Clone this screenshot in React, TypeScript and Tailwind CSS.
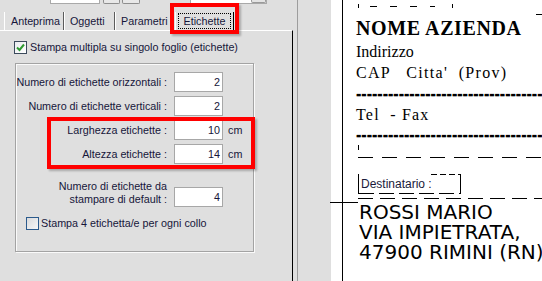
import React from "react";

type RowProps = {
  label: string;
  value: string;
  unit?: string;
};

function NumBox({ value }: { value: string }) {
  return (
    <div className="flex h-[20px] w-[49px] shrink-0 items-center justify-end border border-[#a7a7a7] bg-white pr-[2px]">
      {value}
    </div>
  );
}

function FieldRow({ label, value, unit }: RowProps) {
  return (
    <div className="flex h-[20px] items-center">
      <span className="w-[151px] shrink-0 text-right whitespace-nowrap">{label}</span>
      <div className="ml-[7px]">
        <NumBox value={value} />
      </div>
      {unit && <span className="ml-[5px]">{unit}</span>}
    </div>
  );
}

function CheckBox({ checked }: { checked?: boolean }) {
  return (
    <span
      className={
        checked
          ? "flex size-[13px] shrink-0 items-center justify-center border border-[#3b4a5c] bg-gradient-to-br from-[#e9ecef] to-white"
          : "flex size-[13px] shrink-0 items-center justify-center border border-[#2b5a8c] bg-gradient-to-br from-[#d9dadc] to-[#f7f7f7]"
      }
    >
      {checked && (
        <svg width="9" height="9" viewBox="0 0 9 9">
          <path d="M1 4.5 L3.5 7 L8 1.5" fill="none" stroke="#2f9a32" strokeWidth="2" />
        </svg>
      )}
    </span>
  );
}

const TABS = [
  { label: "Anteprima", width: "w-[60px]", pad: "pl-[7px]" },
  { label: "Oggetti", width: "w-[51px]", pad: "pl-[6px]" },
  { label: "Parametri", width: "w-[58px]", pad: "pl-[6px]" },
];

function LeftPane() {
  return (
    <div className="flex w-[293px] shrink-0 flex-col">
      {/* controls cut off above the tabs */}
      <div className="flex h-[4px] items-start">
        <div className="ml-[50px] h-[4px] w-[50px] border-x border-b border-[#a9a9a9] bg-white" />
        <div className="ml-[3px] h-[4px] w-[17px] rounded-b-[2px] border-x border-b border-[#8e8e8e] bg-[#e8e8e8]" />
        <div className="ml-[2px] h-[4px] w-[18px] rounded-b-[2px] border-x border-b border-[#8e8e8e] bg-[#e8e8e8]" />
        <div className="ml-[50px] flex h-[4px] w-[77px] border-x border-b border-[#a9a9a9] bg-white">
          <div className="ml-auto h-[3px] w-[15px] rounded-b-[2px] border-x border-b border-[#9a9a9a] bg-[#e4e4e4]" />
        </div>
      </div>

      {/* tab strip */}
      <div className="mt-[8px] flex h-[18px] items-stretch pl-[4px]">
        {TABS.map((tab) => (
          <div
            key={tab.label}
            className={`${tab.width} ${tab.pad} flex items-center border-r border-[#5c5c5c] shadow-[inset_1px_0_0_#ffffff]`}
          >
            {tab.label}
          </div>
        ))}
        <div className="ml-[2px] flex w-[59px] items-center border-r border-black pl-[3px] shadow-[inset_1px_0_0_#ffffff]">
          <div className="flex h-[16px] w-[53px] items-center justify-center border border-dotted border-black">
            Etichette
          </div>
        </div>
      </div>

      {/* tab page */}
      <div className="flex-1 border-t border-r border-t-white border-r-black">
        <div className="mt-[10px] ml-[14px] flex h-[13px] items-center gap-[3px]">
          <CheckBox checked />
          <span className="whitespace-nowrap">Stampa multipla su singolo foglio (etichette)</span>
        </div>

        <div className="mt-[9px] ml-[15px] h-[189px] w-[239px] border border-[#a3a3a3] shadow-[inset_1px_1px_0_#fafafa,1px_1px_0_#fafafa]">
          <div className="flex flex-col gap-[4px] pt-[8px]">
            <FieldRow label="Numero di etichette orizzontali :" value="2" />
            <FieldRow label="Numero di etichette verticali :" value="2" />
            <FieldRow label="Larghezza etichette :" value="10" unit="cm" />
            <FieldRow label="Altezza etichette :" value="14" unit="cm" />
          </div>

          <div className="mt-[16px] flex items-start">
            <div className="w-[151px] shrink-0 text-right leading-[13px] whitespace-nowrap">
              Numero di etichette da
              <br />
              stampare di default :
            </div>
            <div className="mt-[7px] ml-[7px]">
              <NumBox value="4" />
            </div>
          </div>

          <div className="mt-[10px] ml-[10px] flex h-[13px] items-center gap-[2px]">
            <CheckBox />
            <span className="whitespace-nowrap">Stampa 4 etichetta/e per ogni collo</span>
          </div>
        </div>
      </div>
    </div>
  );
}

function Preview() {
  const hyphens = "-".repeat(40);
  return (
    <div className="flex min-w-0 flex-1 bg-white text-black">
      <div className="w-[11px] shrink-0" />
      <div className="min-w-0 flex-1 overflow-hidden border-l border-black">
        {/* bottom of the previous label */}
        <div className="flex h-[16px] items-start">
          <div className="mt-[4px] ml-[15px] h-[4px] w-px bg-black" />
          <div className="mt-[6px] ml-[11px] h-px w-[68px] bg-[repeating-linear-gradient(90deg,#000_0_7px,transparent_7px_20px)]" />
          <div className="mt-[4px] ml-[17px] h-[4px] w-px bg-black" />
          <div className="mt-[14px] ml-[83px] h-px w-[6px] bg-black" />
        </div>

        <div className="ml-[13px] font-['Liberation_Serif','Times_New_Roman',serif] whitespace-nowrap">
          <div className="text-[20px] leading-[25px] font-bold tracking-[0.6px]">NOME AZIENDA</div>
          <div className="text-[16px] leading-[21px]">Indirizzo</div>
          <div className="text-[16px] leading-[21px] tracking-[1.3px] whitespace-pre">{"CAP   Citta'  (Prov)"}</div>
          <div className="text-[16px] leading-[21px] font-bold [text-shadow:0_0.6px_0_#000]">{hyphens}</div>
          <div className="text-[16px] leading-[21px] tracking-[1.2px] whitespace-pre">{"Tel  - Fax"}</div>
          <div className="text-[16px] leading-[19px] font-bold [text-shadow:0_0.6px_0_#000]">{hyphens}</div>
        </div>

        <div className="h-[13px] pt-[1px]">
          <div className="ml-[15px] h-[5px] w-px bg-black" />
        </div>
        <div className="ml-[15px] h-px bg-[repeating-linear-gradient(90deg,#000_0_15px,transparent_15px_24px)]" />

        {/* recipient caption */}
        <div className="mt-[16px] ml-[15px] w-[103px] border-x border-black">
          <div className="flex h-px">
            <div className="w-[72px]" />
            <div className="flex-1 bg-[repeating-linear-gradient(90deg,#000_0_6px,transparent_6px_9px)]" />
          </div>
          <div className="flex h-[18px] items-center pl-[2px] font-['Liberation_Sans',Arial,sans-serif] text-[12px] text-[#1a1a3a]">
            Destinatario :
          </div>
          <div className="h-px bg-[repeating-linear-gradient(90deg,#000_0_15px,transparent_15px_20px)]" />
        </div>

        <div className="mt-[4px] ml-[15px] h-px bg-[repeating-linear-gradient(90deg,#000_0_15px,transparent_15px_22px)]" />

        {/* recipient address */}
        <div className="ml-[15px] flex">
          <div className="w-px self-stretch bg-[repeating-linear-gradient(180deg,#000_0_16px,transparent_16px_20px)]" />
          <div className="pt-[3px] pl-[1px] font-['DejaVu_Sans',Verdana,sans-serif] text-[20px] leading-[20px] whitespace-nowrap">
            <div>ROSSI MARIO</div>
            <div>VIA IMPIETRATA,</div>
            <div>47900 RIMINI (RN)</div>
          </div>
        </div>
      </div>
    </div>
  );
}

export default function App() {
  return (
    <div className="relative flex h-[281px] w-[542px] overflow-hidden bg-[#dfdfdf] font-['Liberation_Sans',Arial,sans-serif] text-[10.75px] text-[#16163a]">
      <LeftPane />

      {/* splitter */}
      <div className="flex w-[38px] shrink-0">
        <div className="ml-[4px] w-px bg-[#9d9d9d]" />
      </div>

      <Preview />

      {/* margin guide on the label canvas */}
      <div className="absolute top-[202px] left-[330px] h-px w-[28px] bg-black" />

      {/* red annotation boxes */}
      <div className="pointer-events-none absolute top-[3px] left-[170px] h-[31px] w-[69px] border-4 border-[#ff0000] shadow-[2px_2px_2px_rgba(0,0,0,0.25)]" />
      <div className="pointer-events-none absolute top-[117px] left-[47px] h-[52px] w-[208px] border-4 border-[#ff0000] shadow-[2px_2px_2px_rgba(0,0,0,0.25)]" />
    </div>
  );
}
